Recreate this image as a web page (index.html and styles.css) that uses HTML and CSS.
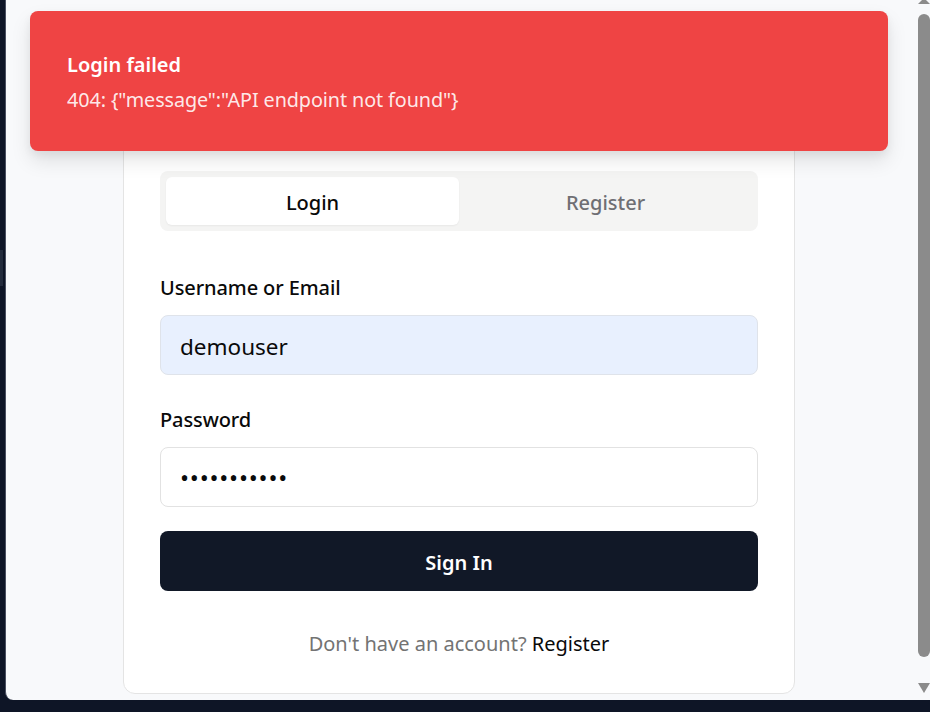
FILE: index.html
```html
<!DOCTYPE html>
<html lang="en">
<head>
<meta charset="utf-8">
<title>Login</title>
<link rel="stylesheet" href="styles.css">
</head>
<body>
<div class="frame">
  <div class="side"><div class="side-tab"></div></div>
  <div class="viewport">
    <div class="page">
      <div class="toast">
        <div class="toast-title">Login failed</div>
        <div class="toast-msg">404: {"message":"API endpoint not found"}</div>
      </div>
      <div class="card">
        <div class="tabs">
          <div class="tab active">Login</div>
          <div class="tab">Register</div>
        </div>
        <form class="form">
          <div class="field">
            <label class="label">Username or Email</label>
            <div class="input autofill">demouser</div>
          </div>
          <div class="field">
            <label class="label">Password</label>
            <div class="input dots">•••••••••••</div>
          </div>
          <div class="btn">Sign In</div>
        </form>
        <p class="footer">Don't have an account? <span class="link">Register</span></p>
      </div>
    </div>
    <div class="scrollbar">
      <div class="arrow up"></div>
      <div class="thumb"></div>
      <div class="arrow down"></div>
    </div>
  </div>
</div>
</body>
</html>
```
FILE: styles.css
```css
* { box-sizing: border-box; }
html, body { margin: 0; padding: 0; }
body {
  width: 930px;
  height: 712px;
  overflow: hidden;
  background: #0e1526;
  font-family: "Noto Sans", "Open Sans", sans-serif;
}
.frame {
  display: flex;
  height: 700px;
}
.side {
  width: 5px;
  flex: none;
  background: #0e1526;
  padding-top: 250px;
}
.side-tab {
  width: 3px;
  height: 36px;
  background: #232b3c;
}
.viewport {
  flex: 1;
  display: flex;
  background: #f8f9fb;
  border-left: 1px solid #4a5060;
  border-bottom-left-radius: 8px;
  overflow: hidden;
}
.page {
  flex: 1;
  position: relative;
  display: flex;
  flex-direction: column;
  align-items: center;
  padding-top: 134px;
}
.toast {
  position: absolute;
  left: 24px;
  top: 11px;
  width: 858px;
  height: 140px;
  background: #ef4444;
  border-radius: 8px;
  box-shadow: 0 10px 20px rgba(0,0,0,0.10), 0 4px 8px rgba(0,0,0,0.05);
  padding: 39px 37px 0;
  color: #fff;
  z-index: 2;
}
.toast-title {
  font-size: 20px;
  font-weight: 600;
  line-height: 28px;
  padding-top: 1px;
}
.toast-msg {
  font-size: 19.8px;
  line-height: 28px;
  margin-top: 7px;
  letter-spacing: -0.1px;
  color: rgba(255,255,255,0.9);
}
.card {
  width: 672px;
  flex: none;
  background: #fff;
  border: 1px solid #e4e4e4;
  border-radius: 12px;
  padding: 36px;
}
.tabs {
  display: grid;
  grid-template-columns: 1fr 1fr;
  background: #f4f4f3;
  border-radius: 8px;
  padding: 6px;
  height: 60px;
}
.tab {
  display: flex;
  align-items: center;
  justify-content: center;
  padding-top: 3px;
  font-size: 20px;
  font-weight: 500;
  color: #6f6f74;
  border-radius: 6px;
}
.tab.active {
  background: #fff;
  color: #0a0a0a;
  box-shadow: 0 1px 2px rgba(0,0,0,0.05);
}
.form {
  margin: 44px 0 0;
  display: flex;
  flex-direction: column;
}
.field {
  display: flex;
  flex-direction: column;
  gap: 14px;
  margin-bottom: 32px;
}
.field + .field { margin-bottom: 24px; }
.label {
  font-size: 20px;
  font-weight: 500;
  line-height: 26px;
  color: #0a0a0a;
  letter-spacing: -0.1px;
}
.input {
  height: 60px;
  border: 1px solid #e2e2e2;
  border-radius: 8px;
  padding: 2px 19px 0;
  display: flex;
  align-items: center;
  font-size: 22.5px;
  color: #0a0a0a;
  background: #fff;
}
.input.autofill {
  background: #e8f0fe;
  border-color: #dfe3ea;
}
.input.dots {
  font-size: 24px;
  letter-spacing: 0.8px;
  padding-top: 0;
}
.btn {
  height: 60px;
  background: #111827;
  border-radius: 8px;
  color: #fff;
  display: flex;
  align-items: center;
  justify-content: center;
  padding-top: 3px;
  font-size: 20px;
  font-weight: 600;
}
.footer {
  margin: 40px 0 0;
  text-align: center;
  font-size: 20px;
  line-height: 26px;
  color: #737373;
}
.link { color: #0a0a0a; }
.scrollbar {
  width: 18px;
  flex: none;
  display: flex;
  flex-direction: column;
  align-items: center;
  padding: 0 0 7px 5px;
  background: #f8f9fb;
}
.arrow {
  width: 0;
  height: 0;
  border-left: 6.5px solid transparent;
  border-right: 6.5px solid transparent;
}
.arrow.up {
  border-bottom: 6px solid #8b8b8b;
  margin-top: -2px;
}
.arrow.down {
  border-top: 10px solid #8b8b8b;
}
.thumb {
  width: 12px;
  margin-top: 10px;
  height: 643px;
  background: #8b8b8b;
  border-radius: 6px;
  margin-bottom: 26px;
}
```
